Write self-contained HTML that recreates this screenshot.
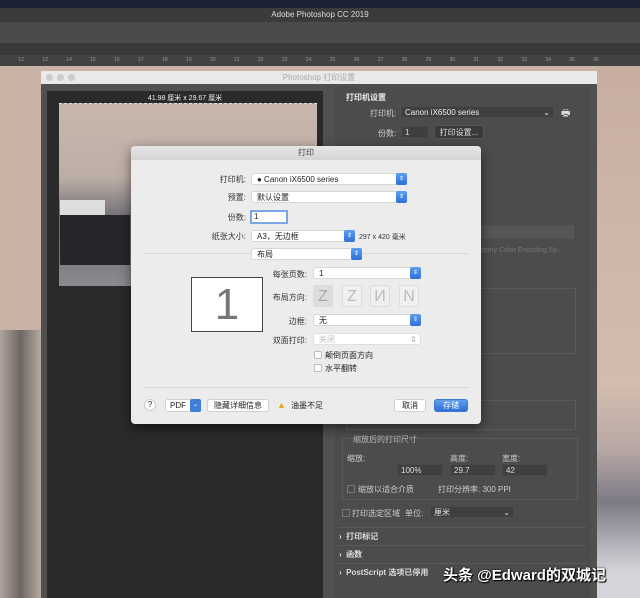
<!DOCTYPE html>
<html><head><meta charset="utf-8"><style>
*{margin:0;padding:0;box-sizing:border-box}
body{width:640px;height:598px;overflow:hidden;position:relative;background:#c8b3a6;font-family:"Liberation Sans","Noto Sans CJK SC",sans-serif;font-size:8px;color:#222}
.a{position:absolute}
.lbl{position:absolute;text-align:right;font-size:8px;color:#333}
.sel{position:absolute;background:#fff;border:1px solid #d6d6d6;border-radius:3px;height:12px;font-size:8px;padding-left:5px;line-height:11px;color:#222}
.sel .st{position:absolute;right:-1px;top:-1px;width:11px;height:12px;background:linear-gradient(#5b9ff0,#2f6fd8);border-radius:2px;color:#fff;font-size:6px;text-align:center;line-height:12px}
.dk{color:#ccc;font-size:8px}
.inp{position:absolute;background:#3f3f3f;border:1px solid #4a4a4a;height:12px;color:#ddd;font-size:8px;padding-left:3px;line-height:11px}
.cb{position:absolute;width:8px;height:8px;background:#fff;border:1px solid #bbb;border-radius:2px}
.btn{position:absolute;background:#fff;border:1px solid #d0d0d0;border-radius:3px;height:13px;font-size:8px;text-align:center;line-height:12px;color:#222}
.o{position:absolute;width:20px;height:22px;border:1px solid #ddd;background:#f0f0f0;border-radius:2px;font-size:16px;color:#bbb;text-align:center;line-height:21px;font-family:"Liberation Sans",sans-serif}
</style></head><body>
<div class="a" style="left:0;top:0;width:640px;height:8px;background:#1c2236"></div>
<div class="a" style="left:0;top:8px;width:640px;height:14px;background:#3b3b3b;color:#ddd;text-align:center;font-size:8px;line-height:14px">Adobe Photoshop CC 2019</div>
<div class="a" style="left:0;top:22px;width:640px;height:21px;background:#4b4b4b"></div>
<div class="a" style="left:0;top:43px;width:640px;height:12px;background:#393939"></div>
<div class="a" style="left:0;top:55px;width:640px;height:11px;background:#424242;color:#999;font-size:5px;line-height:11px;white-space:nowrap;word-spacing:17px">&nbsp;12 13 14 15 16 17 18 19 20 21 22 23 24 25 26 27 28 29 30 31 32 33 34 35 36</div>
<div class="a" style="left:597px;top:66px;width:43px;height:532px;background:linear-gradient(#c7aea0 0%,#d3bcae 60%,#b8a8a5 72%,#7d7a86 82%,#d6d4da 95%)"></div>
<div class="a" style="left:0;top:330px;width:41px;height:268px;background:linear-gradient(90deg,#b0a49e,#6f6663 50%,#b6a9a2)"></div>
<!-- PS dialog -->
<div class="a" style="left:41px;top:71px;width:556px;height:527px;background:#505050"></div>
<div class="a" style="left:41px;top:71px;width:556px;height:13px;background:#e9e9e9;color:#aaa;text-align:center;font-size:8px;line-height:13px">Photoshop 打印设置</div>
<div class="a" style="left:46px;top:74px;width:7px;height:7px;border-radius:50%;background:#ccc"></div>
<div class="a" style="left:57px;top:74px;width:7px;height:7px;border-radius:50%;background:#ccc"></div>
<div class="a" style="left:68px;top:74px;width:7px;height:7px;border-radius:50%;background:#ccc"></div>
<div class="a" style="left:47px;top:91px;width:276px;height:507px;background:#2a2a2a"></div>
<div class="a" style="left:47px;top:93px;width:276px;text-align:center;color:#eee;font-size:7px">41.98 厘米 x 29.67 厘米</div>
<div class="a" style="left:59px;top:103px;width:258px;height:183px;background:linear-gradient(#c9b7ad,#bcaea6 40%,#6a6870 65%,#8a8a90 100%);border-top:1px dashed #ddd"></div>
<div class="a" style="left:60px;top:215px;width:70px;height:50px;background:#25262c"></div>
<div class="a" style="left:60px;top:200px;width:45px;height:15px;background:#ddd"></div>
<div class="a" style="left:335px;top:87px;width:256px;height:511px;background:#4c4c4c"></div>
<div class="a dk" style="left:346px;top:92px;font-weight:bold;color:#eee">打印机设置</div>
<div class="a dk" style="left:370px;top:108px">打印机:</div>
<div class="inp" style="left:401px;top:106px;width:153px;color:#eee">Canon iX6500 series <span style="float:right;margin-right:3px">⌄</span></div>
<div class="a" style="left:561px;top:106px;color:#ddd;font-size:10px">🖶</div>
<div class="a dk" style="left:378px;top:128px">份数:</div>
<div class="inp" style="left:401px;top:126px;width:28px">1</div>
<div class="a" style="left:434px;top:125px;width:50px;height:14px;background:#3a3a3a;border:1px solid #555;color:#ddd;font-size:8px;text-align:center;line-height:13px">打印设置...</div>
<div class="inp" style="left:480px;top:226px;width:94px;background:#555;border-color:#5a5a5a"></div>
<div class="a" style="left:480px;top:247px;color:#777;font-size:7px">demy Color Encoding Sy...</div>
<div class="a" style="left:346px;top:288px;width:230px;height:66px;border:1px solid #5a5a5a"></div>
<div class="a" style="left:346px;top:400px;width:230px;height:30px;border:1px solid #5a5a5a"></div>
<div class="a" style="left:342px;top:438px;width:236px;height:62px;border:1px solid #5a5a5a"></div>
<div class="a dk" style="left:353px;top:434px;color:#bbb">缩放后的打印尺寸</div>
<div class="a dk" style="left:347px;top:453px">缩放:</div>
<div class="a dk" style="left:450px;top:453px">高度:</div>
<div class="a dk" style="left:502px;top:453px">宽度:</div>
<div class="inp" style="left:397px;top:464px;width:46px">100%</div>
<div class="inp" style="left:450px;top:464px;width:46px">29.7</div>
<div class="inp" style="left:502px;top:464px;width:46px">42</div>
<div class="a" style="left:347px;top:485px;width:8px;height:8px;border:1px solid #777"></div>
<div class="a dk" style="left:358px;top:484px">缩放以适合介质</div>
<div class="a dk" style="left:438px;top:484px">打印分辨率: 300 PPI</div>
<div class="a" style="left:342px;top:509px;width:8px;height:8px;border:1px solid #777"></div>
<div class="a dk" style="left:352px;top:508px">打印选定区域</div>
<div class="a dk" style="left:405px;top:508px">单位:</div>
<div class="inp" style="left:430px;top:506px;width:84px">厘米 <span style="float:right;margin-right:3px">⌄</span></div>
<div class="a dk" style="left:339px;top:531px;font-weight:bold;color:#ddd">›&nbsp; 打印标记</div>
<div class="a dk" style="left:339px;top:549px;font-weight:bold;color:#ddd">›&nbsp; 函数</div>
<div class="a dk" style="left:339px;top:567px;font-weight:bold;color:#ddd">›&nbsp; PostScript 选项已停用</div>
<div class="a" style="left:338px;top:527px;width:248px;height:1px;background:#5a5a5a"></div>
<div class="a" style="left:338px;top:545px;width:248px;height:1px;background:#5a5a5a"></div>
<div class="a" style="left:338px;top:563px;width:248px;height:1px;background:#5a5a5a"></div>
<div class="a" style="left:443px;top:564px;color:#fff;font-size:15px;text-shadow:0 0 2px #000,1px 1px 1px #000;white-space:nowrap;font-weight:bold">头条 @Edward的双城记</div>
<!-- print dialog -->
<div class="a" style="left:131px;top:146px;width:350px;height:278px;background:#ececec;border-radius:4px;box-shadow:0 4px 12px rgba(0,0,0,.5)"></div>
<div class="a" style="left:131px;top:146px;width:350px;height:14px;background:linear-gradient(#e6e6e6,#d4d4d4);border-radius:4px 4px 0 0;text-align:center;font-size:8px;line-height:14px;color:#444">打印</div>
<div class="lbl" style="left:180px;top:174px;width:66px">打印机:</div>
<div class="sel" style="left:251px;top:173px;width:156px">● Canon iX6500 series<div class="st">⇕</div></div>
<div class="lbl" style="left:180px;top:192px;width:66px">预置:</div>
<div class="sel" style="left:251px;top:191px;width:156px">默认设置<div class="st">⇕</div></div>
<div class="lbl" style="left:180px;top:212px;width:66px">份数:</div>
<div class="a" style="left:250px;top:210px;width:38px;height:14px;background:#fff;border:2px solid #7aa7e4;font-size:8px;padding-left:2px;line-height:10px">1</div>
<div class="lbl" style="left:180px;top:231px;width:66px">纸张大小:</div>
<div class="sel" style="left:251px;top:230px;width:104px">A3，无边框<div class="st">⇕</div></div>
<div class="a" style="left:359px;top:232px;font-size:7px;color:#333">297 x 420 毫米</div>
<div class="a" style="left:144px;top:253px;width:325px;height:1px;background:#d8d8d8"></div>
<div class="sel" style="left:251px;top:248px;width:111px">布局<div class="st">⇕</div></div>
<div class="a" style="left:191px;top:277px;width:72px;height:55px;background:#fff;border:1px solid #444;font-size:44px;color:#777;text-align:center;line-height:54px;font-family:'Liberation Sans',sans-serif">1</div>
<div class="lbl" style="left:250px;top:269px;width:57px">每张页数:</div>
<div class="sel" style="left:313px;top:267px;width:108px">1<div class="st">⇕</div></div>
<div class="lbl" style="left:250px;top:292px;width:57px">布局方向:</div>
<div class="o" style="left:313px;top:285px;background:#ddd;color:#aaa">Z</div>
<div class="o" style="left:342px;top:285px">Z</div>
<div class="o" style="left:370px;top:285px">И</div>
<div class="o" style="left:399px;top:285px">N</div>
<div class="lbl" style="left:250px;top:316px;width:57px">边框:</div>
<div class="sel" style="left:313px;top:314px;width:108px">无<div class="st">⇕</div></div>
<div class="lbl" style="left:250px;top:335px;width:57px">双面打印:</div>
<div class="sel" style="left:313px;top:333px;width:108px;color:#bbb;border-color:#e0e0e0">关闭<span style="position:absolute;right:3px;color:#aaa">⇕</span></div>
<div class="cb" style="left:314px;top:351px"></div>
<div class="a" style="left:325px;top:350px;font-size:8px">颠倒页面方向</div>
<div class="cb" style="left:314px;top:364px"></div>
<div class="a" style="left:325px;top:363px;font-size:8px">水平翻转</div>
<div class="a" style="left:144px;top:387px;width:325px;height:1px;background:#d8d8d8"></div>
<div class="a" style="left:144px;top:399px;width:12px;height:12px;border-radius:50%;background:#fff;border:1px solid #ccc;font-size:8px;text-align:center;line-height:10px">?</div>
<div class="btn" style="left:165px;top:399px;width:36px;text-align:left;padding-left:4px">PDF<div style="position:absolute;right:-1px;top:-1px;width:11px;height:13px;background:#3e7fdc;border-radius:2px;color:#fff;font-size:6px;text-align:center">⌄</div></div>
<div class="btn" style="left:207px;top:399px;width:62px">隐藏详细信息</div>
<div class="a" style="left:277px;top:400px;color:#e8a81c;font-size:9px">▲</div>
<div class="a" style="left:291px;top:400px;font-size:8px">油墨不足</div>
<div class="btn" style="left:394px;top:399px;width:32px">取消</div>
<div class="btn" style="left:434px;top:399px;width:34px;background:linear-gradient(#5fa0ef,#2f6fd6);color:#fff;border-color:#3b78d6">存储</div>
</body></html>
